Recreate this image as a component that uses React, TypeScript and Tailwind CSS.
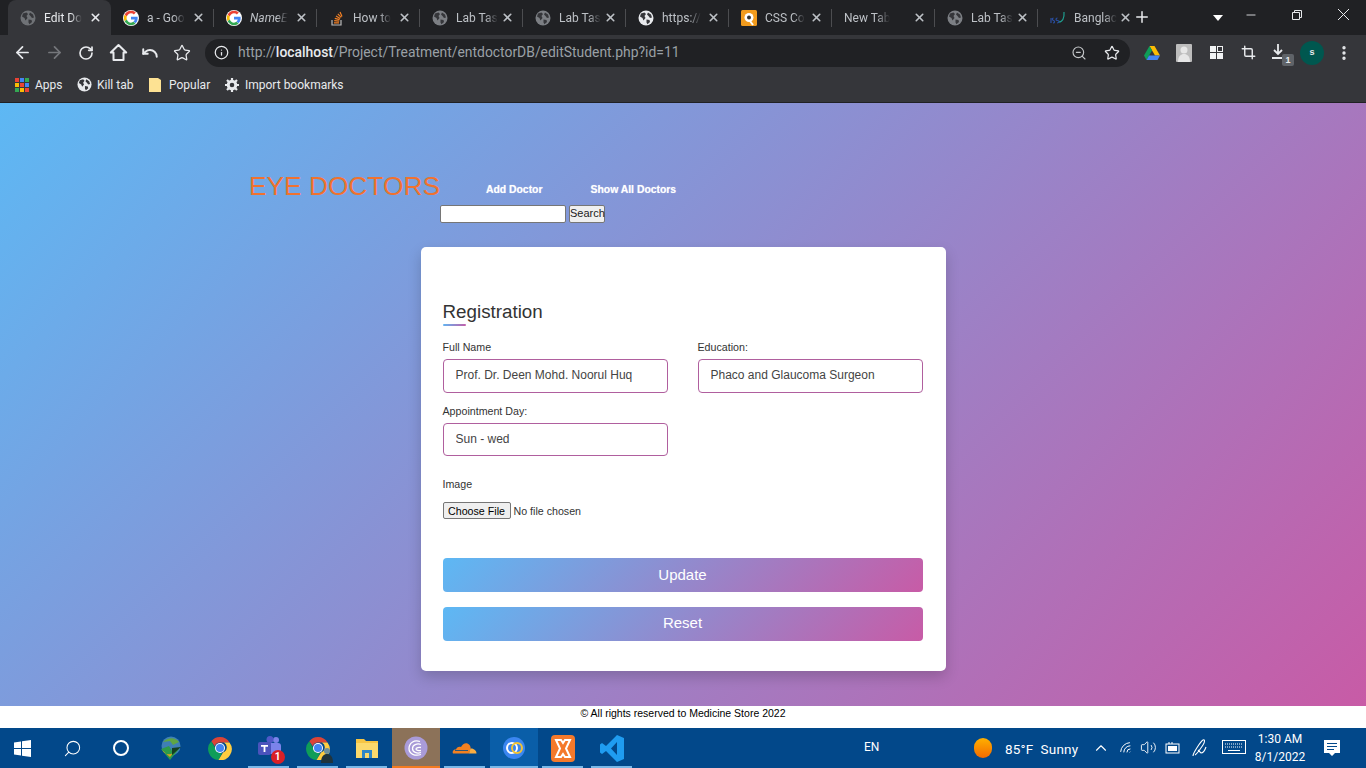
import { ArrowLeft, ArrowRight, RotateCw, Undo, Star, Info, ZoomOut, Crop, MoreVertical, ChevronUp, X, Plus, Minus, Search, Volume2, Wifi } from "lucide-react";

const Globe = ({ c = "#9aa0a6", s = 16 }: { c?: string; s?: number }) => (
  <svg width={s} height={s} viewBox="0 0 16 16" className="shrink-0">
    <circle cx="8" cy="8" r="7.5" fill={c} />
    <path d="M3 3.5 6.5 2.5 8 4 6.5 6 7.5 8 5.5 10.5 4.5 8 2 6.5ZM10 2.5l3 2 1 3-2 .5-1.5-2L9 4.5ZM8.5 9.5l3 .5.5 2-2.5 2.2-1-1.7Z" fill="#35363a" />
  </svg>
);
const GIcon = () => (
  <svg width="16" height="16" viewBox="0 0 48 48" className="shrink-0">
    <path fill="#fff" d="M24 0a24 24 0 1 0 0 48 24 24 0 0 0 0-48Z" />
    <path fill="#EA4335" d="M24 10c3.5 0 6.4 1.2 8.7 3.3l5.7-5.7C34.9 4.4 29.9 2.5 24 2.5 15.6 2.5 8.400 7.300 4.900 14.300l6.700 5.200C13.200 14.100 18.100 10 24 10Z" />
    <path fill="#4285F4" d="M44 24.500c0-1.500-.1-2.900-.4-4.300H24v8.200h11.300c-.5 2.600-2 4.900-4.200 6.400l6.500 5C41.400 36.300 44 30.900 44 24.500Z" />
    <path fill="#FBBC05" d="M11.600 28.500a12 12 0 0 1 0-9l-6.700-5.200a21.500 21.500 0 0 0 0 19.400Z" />
    <path fill="#34A853" d="M24 45.500c5.800 0 10.700-1.900 13.600-5.200l-6.500-5c-1.800 1.200-4.100 2.700-7.100 2.700-5.900 0-10.800-4.100-12.400-9.500l-6.700 5.200C8.400 40.700 15.600 45.500 24 45.500Z" />
  </svg>
);
const ChromeIcon = ({ s = 24 }: { s?: number }) => (
  <svg width={s} height={s} viewBox="0 0 48 48" className="shrink-0">
    <path fill="#DB4437" d="M24 2a22 22 0 0 1 19 11H24a11 11 0 0 0-10.500 7.500L6.500 10.500A22 22 0 0 1 24 2Z" />
    <path fill="#0F9D58" d="M6.500 10.500 15 25a11 11 0 0 0 13 9l-7 13.800A22 22 0 0 1 6.500 10.500Z" />
    <path fill="#FFCD40" d="M43 13a22 22 0 0 1-22 34.800L30 33a11 11 0 0 0 2-20Z" />
    <circle cx="24" cy="24" r="10" fill="#fff" />
    <circle cx="24" cy="24" r="8" fill="#4285F4" />
  </svg>
);
const SO = () => (
  <svg width="16" height="16" viewBox="0 0 16 16" className="shrink-0">
    <path d="M3 10v5h9v-5" fill="none" stroke="#bcbbbb" strokeWidth="1.200" />
    <path d="M5 12.800h5M5.200 10.600l5 .6M5.800 8.300l4.800 1.400M7 6l4.200 2.500M8.800 3.800l3.400 3.600M11 2l2 4.500" stroke="#f48024" strokeWidth="1.200" fill="none" />
  </svg>
);
const QIcon = () => (
  <svg width="16" height="16" viewBox="0 0 16 16" className="shrink-0">
    <rect width="16" height="16" rx="1.500" fill="#f29b1d" />
    <circle cx="8" cy="7.500" r="4.500" fill="#fff" />
    <circle cx="8" cy="7.500" r="2" fill="#333" />
    <path d="M9 11l3 4" stroke="#fff" strokeWidth="2" />
  </svg>
);
const BIcon = () => (
  <svg width="16" height="16" viewBox="0 0 16 16" className="shrink-0">
    <path d="M1 8v5M3.500 8c-1.500 0-1.500 2 0 2.500s1.500 2.500-.5 2.500M7.500 8c-2 0-2 2.500 0 2.500s2 2.500-.5 2.500" stroke="#2a4ea0" strokeWidth="1.200" fill="none" />
    <path d="M9 12c3.500 0 5.500-4 5-10" stroke="#1f9d8f" strokeWidth="1.200" fill="none" />
  </svg>
);

type Tab = { icon: React.ReactNode; t: string; italic?: boolean; active?: boolean };
const tabs: Tab[] = [
  { icon: <Globe c="#6f7276" />, t: "Edit Do", active: true },
  { icon: <GIcon />, t: "a - Goo" },
  { icon: <GIcon />, t: "NameE", italic: true },
  { icon: <SO />, t: "How to" },
  { icon: <Globe c="#7c7f84" />, t: "Lab Tas" },
  { icon: <Globe c="#7c7f84" />, t: "Lab Tas" },
  { icon: <Globe c="#e8eaed" />, t: "https://" },
  { icon: <QIcon />, t: "CSS Co" },
  { icon: null, t: "New Tab" },
  { icon: <Globe c="#7c7f84" />, t: "Lab Tas" },
  { icon: <BIcon />, t: "Banglac" },
];

const Slot = ({ children }: { children: React.ReactNode }) => (
  <div className="w-[32px] h-full flex items-center justify-center shrink-0 relative">{children}</div>
);

const taskIcons: { node: React.ReactNode; bar?: string; bg?: string }[] = [
  { node: (
    <svg width="17" height="17" viewBox="0 0 17 17" className="mr-[4px]"><path fill="#fff" d="M0 2.400 7 1.400V8H0ZM8 1.300 17 0v8H8ZM0 9h7v6.600l-7-1ZM8 9h9v8l-9-1.300Z" /></svg>
  ) },
  { node: <Search size={19} color="#fff" strokeWidth={1.300} className="-scale-x-100" /> },
  { node: <span className="block w-[16px] h-[16px] rounded-full border-2 border-white mr-[2px]" /> },
  { node: (
    <svg width="26" height="26" viewBox="0 0 26 26"><circle cx="13" cy="11" r="9.500" fill="#3f7fb5" /><path d="M5 7c5-5 12-5 16 0l-6 3-3-4Z" fill="#5fa544" /><path d="M3 14l8-3 3 5 7-2-9 11Z" fill="#2e9b4a" /><path d="M4 15c3 5 8 5 11 3l-3 4Z" fill="#e3a11c" /><path d="M14 13l9-1-9 8Z" fill="#143f22" /></svg>
  ) },
  { node: <ChromeIcon s={24} /> },
  { node: (
    <div className="relative w-[26px] h-[26px]">
      <svg width="26" height="26" viewBox="0 0 26 26"><circle cx="20" cy="5" r="3" fill="#7b83eb" /><circle cx="14" cy="4.500" r="3.500" fill="#5059c9" /><rect x="12" y="8" width="13" height="11" rx="3" fill="#7b83eb" /><rect x="2" y="7" width="13" height="13" rx="2" fill="#4b53bc" /><path d="M5 10h7v1.800H9.400V17H7.600v-5.200H5Z" fill="#fff" /></svg>
      <span className="absolute right-[-3px] bottom-[-3px] w-[14px] h-[14px] rounded-full bg-[#d92027] text-white text-[10px] font-bold leading-[14px] text-center">1</span>
    </div>
  ), bar: "#79b8e8" },
  { node: (
    <div className="relative"><ChromeIcon s={24} /><svg width="14" height="17" viewBox="0 0 14 17" className="absolute right-[-4px] bottom-[-4px]"><circle cx="7" cy="4" r="3" fill="#6d8f9c" /><path d="M1 16c0-7 3-9 6-9s6 2 6 9Z" fill="#20343d" /></svg></div>
  ), bar: "#79b8e8" },
  { node: (
    <svg width="22" height="20" viewBox="0 0 22 20"><path d="M0 1h8l2 2h12v4H0Z" fill="#f6c544" /><rect y="5" width="22" height="15" fill="#fbd96c" /><rect x="6" y="12" width="10" height="8" fill="#2f86c7" /><rect x="9" y="15" width="4" height="5" fill="#fbd96c" /></svg>
  ), bar: "#79b8e8" },
  { node: (
    <svg width="24" height="24" viewBox="0 0 24 24"><circle cx="12" cy="12" r="11.500" fill="#a99bd8" /><path d="M16 5.500C10 3.500 5 7 5 12.500s6 8 12 6M17 8.500c-4-1.500-8.500.5-8.500 4s4.500 5.500 8.500 4M17 11.500c-2-.5-5 .2-5 1.500s3 2 5 1.500" stroke="#fff" strokeWidth="1.300" fill="none" /></svg>
  ), bg: "#8c7259", bar: "#f47b20" },
  { node: (
    <svg width="25" height="12" viewBox="0 0 25 12"><path d="M1 11.500c-1-2.500 1-4.500 3-4 .5-2 3-3.500 5-2.500C11 1 15 0 17.500 3c1 1.200 1.500 3 1 4.500L17 11.500Z" fill="#f38020" /><path d="M18.500 6.500c3-.5 6 2 6 5H17Z" fill="#fbad41" /><path d="M3 8.500h13" stroke="#004a88" strokeWidth=".8" /></svg>
  ), bar: "#79b8e8" },
  { node: (
    <svg width="22" height="22" viewBox="0 0 22 22"><circle cx="11" cy="11" r="11" fill="#3b86f1" /><circle cx="9" cy="11" r="5" fill="none" stroke="#fff" strokeWidth="2" /><circle cx="14" cy="11" r="5" fill="none" stroke="#f4c430" strokeWidth="2" /></svg>
  ), bg: "#0a5ea8", bar: "#79b8e8" },
  { node: (
    <svg width="24" height="27" viewBox="0 0 24 27"><rect width="24" height="27" rx="4" fill="#f4792b" /><path d="M5 5h5l2 3 2-3h5l-4 8.500 4 8.500h-5l-2-3-2 3H5l4-8.500Z" fill="none" stroke="#fff" strokeWidth="2" /></svg>
  ), bar: "#79b8e8" },
  { node: (
    <svg width="24" height="27" viewBox="0 0 24 27"><path d="M17 0 24 3v21l-7 3L6 16l-4 3-2-1.500V9.500L2 8l4 3Zm0 7-6 6.500 6 6.500Z" fill="#1f9cf0" /></svg>
  ), bar: "#79b8e8" },
];

export default function App() {
  const barCls = "h-[34px] w-[480px] rounded-[4px] bg-[linear-gradient(135deg,#5db8f4,#c85ba6)] text-white text-[15px] flex items-center justify-center";
  const inputCls = "w-[225px] rounded-[4px] border border-[#b05f9e] px-[12px] pb-[2px] text-[12px] text-[#444] outline-none bg-white";
  return (
    <div className="h-screen w-[1366px] overflow-hidden flex flex-col font-['Liberation_Sans',Arial,sans-serif]">
      {/* tab strip */}
      <div className="h-[35px] bg-[#202124] flex pl-[8px] font-['Roboto',sans-serif] shrink-0">
        {tabs.map((t, i) => (
          <div key={i} className={`w-[103px] h-[35px] shrink-0 flex items-center pl-[12px] relative ${t.active ? "bg-[#35363a] rounded-t-[8px]" : ""}`}>
            {i !== 0 && i !== 1 && <span className="absolute left-[-1px] top-[9px] w-px h-[18px] bg-[#4c4d50]" />}
            {t.icon}
            <span className={`${t.icon ? "ml-[8px]" : ""} whitespace-nowrap text-[12px] [mask-image:linear-gradient(90deg,#000_70%,transparent)] ${t.active ? "text-[#e8eaed]" : "text-[#bdc1c6]"} ${t.italic ? "italic" : ""}`}>{t.t}</span>
            <X size={13} strokeWidth={3} color={t.active ? "#e8eaed" : "#bdc1c6"} className="absolute left-[81px] top-[11px]" />
          </div>
        ))}
        <Plus size={18} strokeWidth={2} color="#e8eaed" className="mt-[8px] ml-[-8px]" />
        <div className="w-0 h-0 ml-[62px] mt-[15px] border-l-[5px] border-r-[5px] border-t-[6px] border-transparent border-t-white" />
        <Minus size={14} color="#e8eaed" strokeWidth={1.500} className="ml-[21px] mt-[8px]" />
        <svg width="12" height="12" viewBox="0 0 12 12" className="ml-[33px] mt-[9px]"><path d="M1.500 3.500h7v7h-7ZM3.500 3.500v-2h7v7h-2" fill="none" stroke="#e8eaed" /></svg>
        <svg width="13" height="13" viewBox="0 0 13 13" className="ml-[34px] mt-[8px]"><path d="M1 1l11 11M12 1 1 12" stroke="#e8eaed" /></svg>
      </div>

      {/* toolbar */}
      <div className="h-[35px] bg-[#35363a] flex items-center pl-[6px] shrink-0">
        <Slot><ArrowLeft size={19} color="#e8eaed" strokeWidth={2.200} /></Slot>
        <Slot><ArrowRight size={19} color="#75777b" strokeWidth={2.200} /></Slot>
        <Slot><RotateCw size={16} color="#e8eaed" strokeWidth={2.500} /></Slot>
        <Slot>
          <svg width="19" height="19" viewBox="0 0 19 19"><path d="M9.500 2 1.800 9.500h2.700V17h10V9.500h2.700Z" fill="none" stroke="#e8eaed" strokeWidth="2" strokeLinejoin="round" /></svg>
        </Slot>
        <Slot><Undo size={18} color="#e8eaed" strokeWidth={2.600} /></Slot>
        <Slot><Star size={18} color="#e8eaed" strokeWidth={1.700} /></Slot>
        <div className="ml-[7px] w-[925px] h-[28px] rounded-full bg-[#202124] flex items-center pl-[9px] shrink-0 relative font-['Roboto',sans-serif]">
          <Info size={15} color="#e8eaed" strokeWidth={2} />
          <span className="ml-[9px] text-[13.9px] text-[#9aa0a6] whitespace-nowrap">http://<span className="text-[#e8eaed] font-medium">localhost</span>/Project/Treatment/entdoctorDB/editStudent.php?id=11</span>
          <ZoomOut size={16} color="#c4c7c9" strokeWidth={1.700} className="absolute left-[866px] top-[6px]" />
          <Star size={16} color="#e8eaed" strokeWidth={1.800} className="absolute left-[899px] top-[6px]" />
        </div>
        <div className="ml-[6px] flex h-full">
          <Slot>
            <svg width="16" height="14" viewBox="0 0 16 14"><path d="M5.500 0h5l5.500 9.500h-5Z" fill="#fbbc04" /><path d="M5.500 0 0 9.500 2.500 14 8 4.500Z" fill="#0f9d58" /><path d="M2.500 14h11L16 9.500H5Z" fill="#4285f4" /></svg>
          </Slot>
          <Slot>
            <svg width="16" height="18" viewBox="0 0 16 18"><rect width="16" height="18" rx="1" fill="#bdbdbd" /><circle cx="8" cy="6" r="3.500" fill="#e6e6e6" /><path d="M2 18c0-6 3-8 6-8s6 2 6 8Z" fill="#e6e6e6" /></svg>
          </Slot>
          <Slot>
            <svg width="13" height="13" viewBox="0 0 13 13"><rect width="6" height="6" fill="#f1f3f4" /><rect x="7.500" y=".5" width="5" height="5" fill="none" stroke="#f1f3f4" /><rect y="7" width="6" height="6" fill="#f1f3f4" /><rect x="7" y="7" width="6" height="6" fill="#f1f3f4" /></svg>
          </Slot>
          <Slot><Crop size={15} color="#e8eaed" strokeWidth={2.300} /></Slot>
          <Slot>
            <svg width="16" height="18" viewBox="0 0 16 18" className="mb-[2px]"><path d="M6 1v10M2 7l4 4 4-4M0 15h12" stroke="#e8eaed" strokeWidth="1.800" fill="none" /></svg>
            <span className="absolute left-[18px] top-[19px] w-[12px] h-[12px] rounded-[2px] bg-[#5f6368] text-[#e8eaed] text-[9px] font-bold leading-[12px] text-center">1</span>
          </Slot>
          <Slot><span className="w-[24px] h-[24px] rounded-full bg-[#00574f] text-[#e8eaed] text-[9px] font-bold flex items-center justify-center">s</span></Slot>
          <Slot><MoreVertical size={18} color="#e8eaed" strokeWidth={2.500} /></Slot>
        </div>
      </div>

      {/* bookmarks */}
      <div className="h-[33px] bg-[#35363a] flex items-center pl-[15px] pb-[3px] text-[12px] text-[#e8eaed] border-b border-[#202124] shrink-0 font-['Roboto',sans-serif]">
        <div className="flex items-center gap-[6px] w-[62px] shrink-0">
          <svg width="14" height="14" viewBox="0 0 14 14" className="shrink-0">
            {[0, 5, 10].map((x, a) => [0, 5, 10].map((y, b) => (
              <rect key={`${a}${b}`} x={x} y={y} width="4" height="4" fill={["#ea4335", "#fbbc04", "#34a853", "#4285f4", "#ea4335", "#fbbc04", "#34a853", "#4285f4", "#ea4335"][a * 3 + b]} />
            )))}
          </svg>
          <span>Apps</span>
        </div>
        <div className="flex items-center gap-[5px] w-[72px] shrink-0">
          <Globe c="#e8eaed" s={15} />
          <span>Kill tab</span>
        </div>
        <div className="flex items-center gap-[7px] w-[76px] shrink-0">
          <svg width="13" height="16" viewBox="0 0 13 16" className="shrink-0"><path d="M0 1h9l3 2v12H0Z" fill="#fde293" /></svg>
          <span>Popular</span>
        </div>
        <div className="flex items-center gap-[6px]">
          <svg width="14" height="14" viewBox="0 0 14 14" className="shrink-0"><circle cx="7" cy="7" r="3.800" fill="none" stroke="#e8eaed" strokeWidth="3" /><path d="M7 0v3M7 11v3M0 7h3M11 7h3M2 2l2 2M10 10l2 2M12 2l-2 2M4 10l-2 2" stroke="#e8eaed" strokeWidth="2.200" /></svg>
          <span>Import bookmarks</span>
        </div>
      </div>

      {/* page */}
      <main className="h-[603px] shrink-0 bg-[linear-gradient(135deg,#5db8f4,#c85ba6)] overflow-hidden pt-[69px]">
        <div className="ml-[249px] flex items-start h-[32px]">
          <h1 className="text-[26.3px] leading-[29px] text-[#f0722e] whitespace-nowrap">EYE DOCTORS</h1>
          <nav className="flex text-[10.4px] font-bold text-white mt-[10px] ml-[46px] gap-[48px] [text-shadow:0_0_1px_rgba(255,255,255,0.6)]">
            <span>Add Doctor</span>
            <span>Show All Doctors</span>
          </nav>
        </div>
        <div className="ml-[440px] flex gap-[3px] h-[18px] mt-[1px]">
          <input className="w-[126px] h-[18px] bg-white border border-[#767676] rounded-[2px]" />
          <button className="w-[36px] h-[18px] bg-[#efefef] border border-[#767676] rounded-[2px] text-[11px] leading-none text-[#222] pb-[1px]">Search</button>
        </div>
        <div className="mt-[24px] mx-auto w-[525px] h-[424px] bg-white rounded-[5px] shadow-[0_6px_14px_rgba(0,0,0,0.18)] px-[22px] pt-[53px]">
          <h2 className="text-[18.8px] leading-[24px] text-[#333] relative">
            Registration
            <span className="absolute left-0 top-[24px] w-[23px] h-[2px] bg-[linear-gradient(135deg,#5db8f4,#c85ba6)] rounded-full" />
          </h2>
          <div className="mt-[17px] grid grid-cols-[225px_225px] gap-x-[30px] text-[10.67px] text-[#333]">
            <div>
              <label className="block leading-[12px]">Full Name</label>
              <input readOnly value="Prof. Dr. Deen Mohd. Noorul Huq" className={`${inputCls} h-[34px] mt-[6px]`} />
            </div>
            <div>
              <label className="block leading-[12px]">Education:</label>
              <input readOnly value="Phaco and Glaucoma Surgeon" className={`${inputCls} h-[34px] mt-[6px]`} />
            </div>
            <div className="mt-[12px]">
              <label className="block leading-[12px]">Appointment Day:</label>
              <input readOnly value="Sun - wed" className={`${inputCls} h-[33px] mt-[6px]`} />
            </div>
          </div>
          <label className="block mt-[22px] leading-[12px] text-[10.67px] text-[#333]">Image</label>
          <input type="file" className="block mt-[12px] w-[240px] h-[17px] text-[10.67px] text-[#333] file:h-[17px] file:w-[68px] file:mr-[3px] file:bg-[#efefef] file:border file:border-[#767676] file:rounded-[2px] file:text-black" />
          <button className={`${barCls} mt-[39px]`}>Update</button>
          <button className={`${barCls} mt-[15px] pb-[2px]`}>Reset</button>
        </div>
      </main>

      {/* footer */}
      <footer className="h-[22px] shrink-0 bg-white text-center text-[10.5px] leading-[15px] text-black">© All rights reserved to Medicine Store 2022</footer>

      {/* taskbar */}
      <div className="h-[40px] shrink-0 bg-[#02488a] flex items-stretch relative font-['Roboto',sans-serif] text-white">
        {taskIcons.map((t, i) => (
          <div key={i} className={`h-full flex items-center justify-center relative shrink-0 ${i === 0 ? "w-[48px]" : i === 8 || i === 10 ? "w-[48px] mx-[0.5px]" : "w-[49px]"}`} style={{ background: t.bg }}>
            {t.node}
            {t.bar && <span className={`absolute bottom-0 h-[2px] ${i === 8 || i === 10 ? "inset-x-0" : "inset-x-[4px]"}`} style={{ background: t.bar }} />}
          </div>
        ))}
        <div className="absolute right-0 top-0 h-full w-[510px] text-[12px]">
          <span className="absolute left-[8px] top-[10px]">EN</span>
          <span className="absolute left-[118px] top-[10px] w-[18px] h-[20px] rounded-full bg-[linear-gradient(180deg,#ffb000,#f26a00)]" />
          <span className="absolute left-[149px] top-[11px] text-[13.5px] tracking-[0.2px] whitespace-nowrap">85°F&nbsp; Sunny</span>
          <ChevronUp size={18} strokeWidth={1.500} className="absolute left-[236px] top-[11px]" />
          <Wifi size={15} strokeWidth={1.500} className="absolute left-[263px] top-[13px] -rotate-45" />
          <Volume2 size={17} strokeWidth={1.300} className="absolute left-[284px] top-[11px]" />
          <svg width="16" height="12" viewBox="0 0 16 12" className="absolute left-[309px] top-[14px]"><path d="M4 0v2M7 0v2" stroke="#fff" /><rect x="1" y="2" width="13" height="9" fill="none" stroke="#fff" /><rect x="3" y="4" width="9" height="5" fill="#fff" /></svg>
          <svg width="16" height="20" viewBox="0 0 16 20" className="absolute left-[336px] top-[10px]"><path d="M1 18c0-3 8-15 10-16s2 2 0 5-6 9-8 10M6 12l3 3c2 0 4-3 5-6" fill="none" stroke="#fff" strokeWidth="1.100" /></svg>
          <svg width="24" height="14" viewBox="0 0 24 14" className="absolute left-[366px] top-[12px]"><rect x=".5" y=".5" width="23" height="13" fill="none" stroke="#fff" /><path d="M3 4h18M3 7h18" stroke="#fff" strokeDasharray="1 1" /><path d="M6 10.500h12" stroke="#fff" /></svg>
          <div className="absolute left-[394px] top-[2px] w-[60px] text-center text-[12px] leading-[18px]">
            <div>1:30 AM</div>
            <div>8/1/2022</div>
          </div>
          <svg width="16" height="18" viewBox="0 0 16 18" className="absolute left-[468px] top-[12px]"><path d="M0 0h16v13h-5l-3 3-3-3H0Z" fill="#fff" /><path d="M3 3.500h10M3 6.500h10M3 9.500h7" stroke="#02488a" /></svg>
        </div>
      </div>
    </div>
  );
}
